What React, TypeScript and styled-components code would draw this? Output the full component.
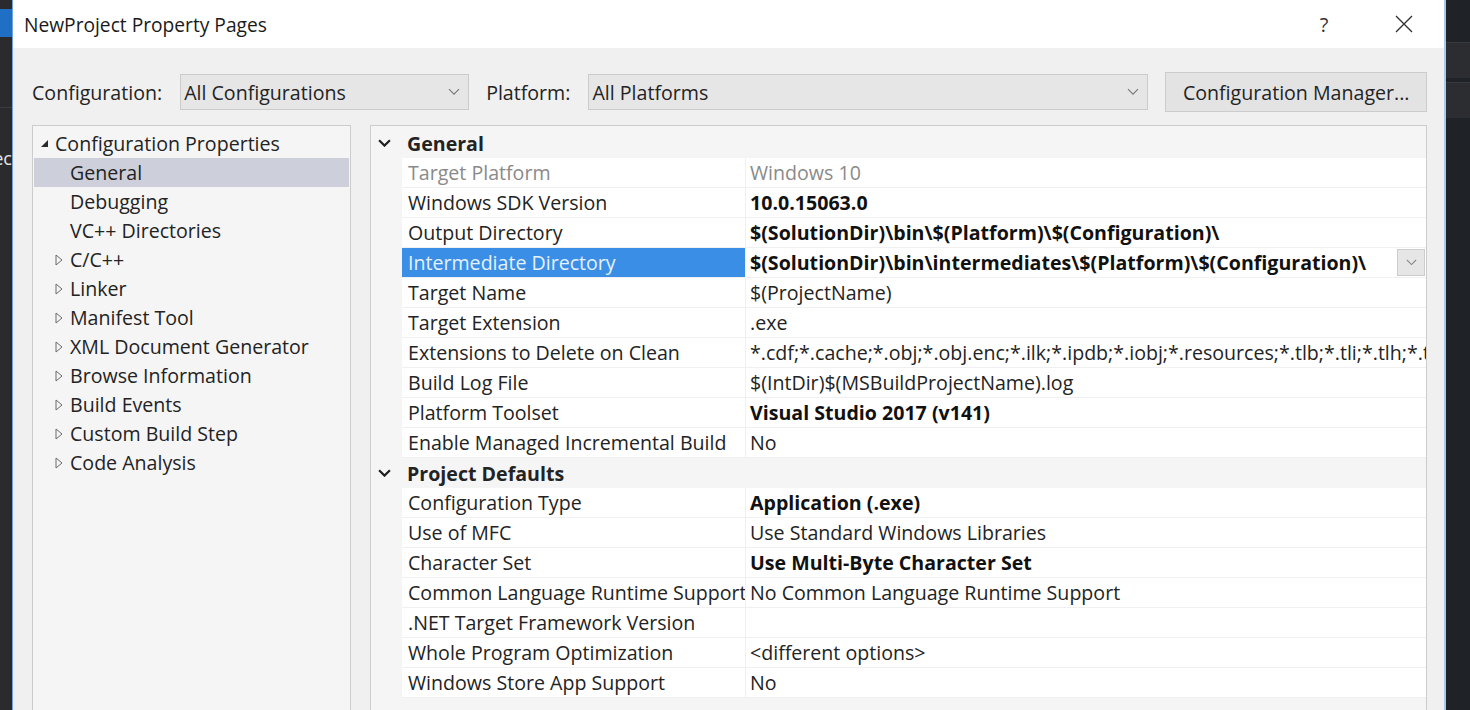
import React from "react";
import styled, { createGlobalStyle } from "styled-components";

const GlobalStyle = createGlobalStyle`
  html, body {
    margin: 0;
    padding: 0;
    background: #252526;
    overflow: hidden;
  }
  * {
    box-sizing: border-box;
  }
`;

const FONT = `"Open Sans", "Noto Sans", "Liberation Sans", sans-serif`;

const Screen = styled.div`
  display: flex;
  width: 1470px;
  height: 710px;
  overflow: hidden;
  font-family: ${FONT};
  font-size: 19.6px;
  color: #232323;
`;

const LeftStrip = styled.div`
  width: 12px;
  flex: none;
  background: #2b2b2e;
  display: flex;
  flex-direction: column;
  overflow: hidden;
  & .blue {
    height: 28px;
    margin-top: 9px;
    background: #1f6fc5;
  }
  & .line {
    height: 1px;
    margin-top: 70px;
    background: #3c3c40;
  }
  & .word {
    display: flex;
    justify-content: flex-end;
    margin-top: 38px;
    color: #e6e6e6;
    font-size: 18px;
    white-space: nowrap;
  }
`;

const RightStrip = styled.div`
  width: 24px;
  flex: none;
  background: #1f2226;
  display: flex;
  flex-direction: column;
  & .band {
    height: 36px;
    margin-top: 4px;
    background: #2c2d31;
    border-top: 1px solid #38393d;
  }
  & .first {
    margin-top: 42px;
  }
`;

const Dialog = styled.div`
  flex: 1;
  min-width: 0;
  display: flex;
  flex-direction: column;
  border-left: 1px solid #6ea3de;
  border-right: 2px solid #a9c9ee;
  background: #f0f0f0;
`;

const TitleBar = styled.div`
  height: 48px;
  flex: none;
  background: #ffffff;
  display: flex;
  align-items: center;
  padding-left: 11px;
  font-size: 19.2px;
  color: #1a1a1a;
  & .title {
    flex: 1;
  }
`;

const TitleButton = styled.div`
  width: 80px;
  height: 48px;
  display: flex;
  align-items: center;
  justify-content: center;
  color: #333;
  font-size: 20px;
`;

const Body = styled.div`
  flex: 1;
  min-width: 0;
  display: flex;
  flex-direction: column;
  padding: 24px 17px 0 19px;
  min-height: 0;
`;

const ConfigBar = styled.div`
  display: flex;
  align-items: center;
  height: 40px;
`;

const Label = styled.span`
  margin-right: 18px;
  white-space: nowrap;
`;

const Combo = styled.div<{ $width: number }>`
  width: ${(p) => p.$width}px;
  flex: none;
  height: 36px;
  display: flex;
  align-items: center;
  padding-left: 3px;
  background: #e6e6e6;
  border: 1px solid #cccccc;
  margin-right: 17px;
  & .text {
    flex: 1;
  }
  & svg {
    margin-right: 8px;
  }
`;

const Button = styled.div`
  flex: 1;
  height: 40px;
  display: flex;
  align-items: center;
  justify-content: center;
  background: #e3e3e3;
  border: 1px solid #cccccc;
  white-space: nowrap;
`;

const Panes = styled.div`
  flex: 1;
  min-width: 0;
  display: flex;
  gap: 19px;
  margin-top: 13px;
  min-height: 0;
`;

const Tree = styled.div`
  width: 319px;
  flex: none;
  background: #f5f5f5;
  border: 1px solid #cccccc;
  border-bottom: none;
  padding: 3px 1px 0 1px;
`;

const TreeItem = styled.div<{ $indent: number; $selected?: boolean }>`
  height: 29px;
  display: flex;
  align-items: center;
  padding-left: ${(p) => p.$indent}px;
  background: ${(p) => (p.$selected ? "#cdd0da" : "transparent")};
  white-space: nowrap;
  & .arrow {
    width: 15px;
    flex: none;
    display: flex;
    align-items: center;
  }
`;

const Grid = styled.div`
  flex: 1;
  min-width: 0;
  background: #f5f5f6;
  border: 1px solid #cccccc;
  border-bottom: none;
  padding-top: 2px;
  display: flex;
  flex-direction: column;
  overflow: hidden;
`;

const CategoryRow = styled.div`
  height: 30px;
  flex: none;
  display: flex;
  align-items: center;
  font-weight: 700;
  padding-left: 7px;
  & .chev {
    width: 29px;
    display: flex;
    align-items: center;
  }
`;

const PropRow = styled.div`
  height: 30px;
  flex: none;
  display: flex;
  margin-left: 31px;
  background: #ffffff;
  border-bottom: 1px solid #f0f0f2;
`;

const NameCell = styled.div<{ $selected?: boolean; $disabled?: boolean }>`
  width: 344px;
  flex: none;
  display: flex;
  align-items: center;
  padding-left: 6px;
  overflow: hidden;
  white-space: nowrap;
  border-right: 1px solid #f0f0f2;
  background: ${(p) => (p.$selected ? "#3b8ee6" : "transparent")};
  color: ${(p) =>
    p.$selected ? "#e4f1ff" : p.$disabled ? "#8a8a8a" : "#232323"};
`;

const ValueCell = styled.div<{ $bold?: boolean; $disabled?: boolean }>`
  flex: 1;
  min-width: 0;
  display: flex;
  align-items: center;
  padding-left: 4px;
  overflow: hidden;
  white-space: nowrap;
  font-weight: ${(p) => (p.$bold ? 700 : 400)};
  color: ${(p) => (p.$disabled ? "#8a8a8a" : p.$bold ? "#111111" : "#232323")};
  & .text {
    flex: 1;
    min-width: 0;
    overflow: hidden;
  }
`;

const DropButton = styled.div`
  width: 28px;
  height: 27px;
  flex: none;
  margin-right: 1px;
  display: flex;
  align-items: center;
  justify-content: center;
  background: #e6e6e6;
  border: 1px solid #cccccc;
`;

const ChevronDown = ({ size = 12, color = "#7a7a7a", width = 1.2 }) => (
  <svg width={size} height={size * 0.6} viewBox="0 0 12 7">
    <path d="M1 1 L6 6 L11 1" fill="none" stroke={color} strokeWidth={width} />
  </svg>
);

const ExpandedTri = () => (
  <svg width="9" height="9" viewBox="0 0 9 9">
    <path d="M8 1 L8 8 L1 8 Z" fill="#2a2a2a" />
  </svg>
);

const CollapsedTri = () => (
  <svg width="8" height="12" viewBox="0 0 8 12">
    <path d="M1 1 L7 6 L1 11 Z" fill="none" stroke="#6a6a6a" strokeWidth="1" />
  </svg>
);

type Prop = {
  name: string;
  value: string;
  bold?: boolean;
  disabled?: boolean;
  selected?: boolean;
};

const general: Prop[] = [
  { name: "Target Platform", value: "Windows 10", disabled: true },
  { name: "Windows SDK Version", value: "10.0.15063.0", bold: true },
  {
    name: "Output Directory",
    value: "$(SolutionDir)\\bin\\$(Platform)\\$(Configuration)\\",
    bold: true,
  },
  {
    name: "Intermediate Directory",
    value: "$(SolutionDir)\\bin\\intermediates\\$(Platform)\\$(Configuration)\\",
    bold: true,
    selected: true,
  },
  { name: "Target Name", value: "$(ProjectName)" },
  { name: "Target Extension", value: ".exe" },
  {
    name: "Extensions to Delete on Clean",
    value:
      "*.cdf;*.cache;*.obj;*.obj.enc;*.ilk;*.ipdb;*.iobj;*.resources;*.tlb;*.tli;*.tlh;*.tmp;*.rsp",
  },
  { name: "Build Log File", value: "$(IntDir)$(MSBuildProjectName).log" },
  { name: "Platform Toolset", value: "Visual Studio 2017 (v141)", bold: true },
  { name: "Enable Managed Incremental Build", value: "No" },
];

const defaults: Prop[] = [
  { name: "Configuration Type", value: "Application (.exe)", bold: true },
  { name: "Use of MFC", value: "Use Standard Windows Libraries" },
  { name: "Character Set", value: "Use Multi-Byte Character Set", bold: true },
  {
    name: "Common Language Runtime Support",
    value: "No Common Language Runtime Support",
  },
  { name: ".NET Target Framework Version", value: "" },
  { name: "Whole Program Optimization", value: "<different options>" },
  { name: "Windows Store App Support", value: "No" },
];

const treeItems = [
  { label: "General", selected: true },
  { label: "Debugging" },
  { label: "VC++ Directories" },
  { label: "C/C++", children: true },
  { label: "Linker", children: true },
  { label: "Manifest Tool", children: true },
  { label: "XML Document Generator", children: true },
  { label: "Browse Information", children: true },
  { label: "Build Events", children: true },
  { label: "Custom Build Step", children: true },
  { label: "Code Analysis", children: true },
];

const PropRows = ({ items }: { items: Prop[] }) => (
  <>
    {items.map((p) => (
      <PropRow key={p.name}>
        <NameCell $selected={p.selected} $disabled={p.disabled}>
          {p.name}
        </NameCell>
        <ValueCell $bold={p.bold} $disabled={p.disabled}>
          <span className="text">{p.value}</span>
          {p.selected && (
            <DropButton>
              <ChevronDown size={11} color="#8a8a8a" />
            </DropButton>
          )}
        </ValueCell>
      </PropRow>
    ))}
  </>
);

export default function App() {
  return (
    <Screen>
      <GlobalStyle />
      <LeftStrip>
        <div className="blue" />
        <div className="line" />
        <div className="word">Projec</div>
      </LeftStrip>
      <Dialog>
        <TitleBar>
          <span className="title">NewProject Property Pages</span>
          <TitleButton>?</TitleButton>
          <TitleButton>
            <svg width="18" height="18" viewBox="0 0 18 18">
              <path d="M1 1 L17 17 M17 1 L1 17" stroke="#333" strokeWidth="1.4" />
            </svg>
          </TitleButton>
        </TitleBar>
        <Body>
          <ConfigBar>
            <Label>Configuration:</Label>
            <Combo $width={289}>
              <span className="text">All Configurations</span>
              <ChevronDown />
            </Combo>
            <Label>Platform:</Label>
            <Combo $width={560}>
              <span className="text">All Platforms</span>
              <ChevronDown />
            </Combo>
            <Button>Configuration Manager...</Button>
          </ConfigBar>
          <Panes>
            <Tree>
              <TreeItem $indent={6}>
                <span className="arrow">
                  <ExpandedTri />
                </span>
                Configuration Properties
              </TreeItem>
              {treeItems.map((t) => (
                <TreeItem key={t.label} $indent={21} $selected={t.selected}>
                  <span className="arrow">{t.children && <CollapsedTri />}</span>
                  {t.label}
                </TreeItem>
              ))}
            </Tree>
            <Grid>
              <CategoryRow>
                <span className="chev">
                  <ChevronDown size={13} color="#1e1e1e" width={2} />
                </span>
                General
              </CategoryRow>
              <PropRows items={general} />
              <CategoryRow>
                <span className="chev">
                  <ChevronDown size={13} color="#1e1e1e" width={2} />
                </span>
                Project Defaults
              </CategoryRow>
              <PropRows items={defaults} />
            </Grid>
          </Panes>
        </Body>
      </Dialog>
      <RightStrip>
        <div className="band first" />
        <div className="band" />
      </RightStrip>
    </Screen>
  );
}
